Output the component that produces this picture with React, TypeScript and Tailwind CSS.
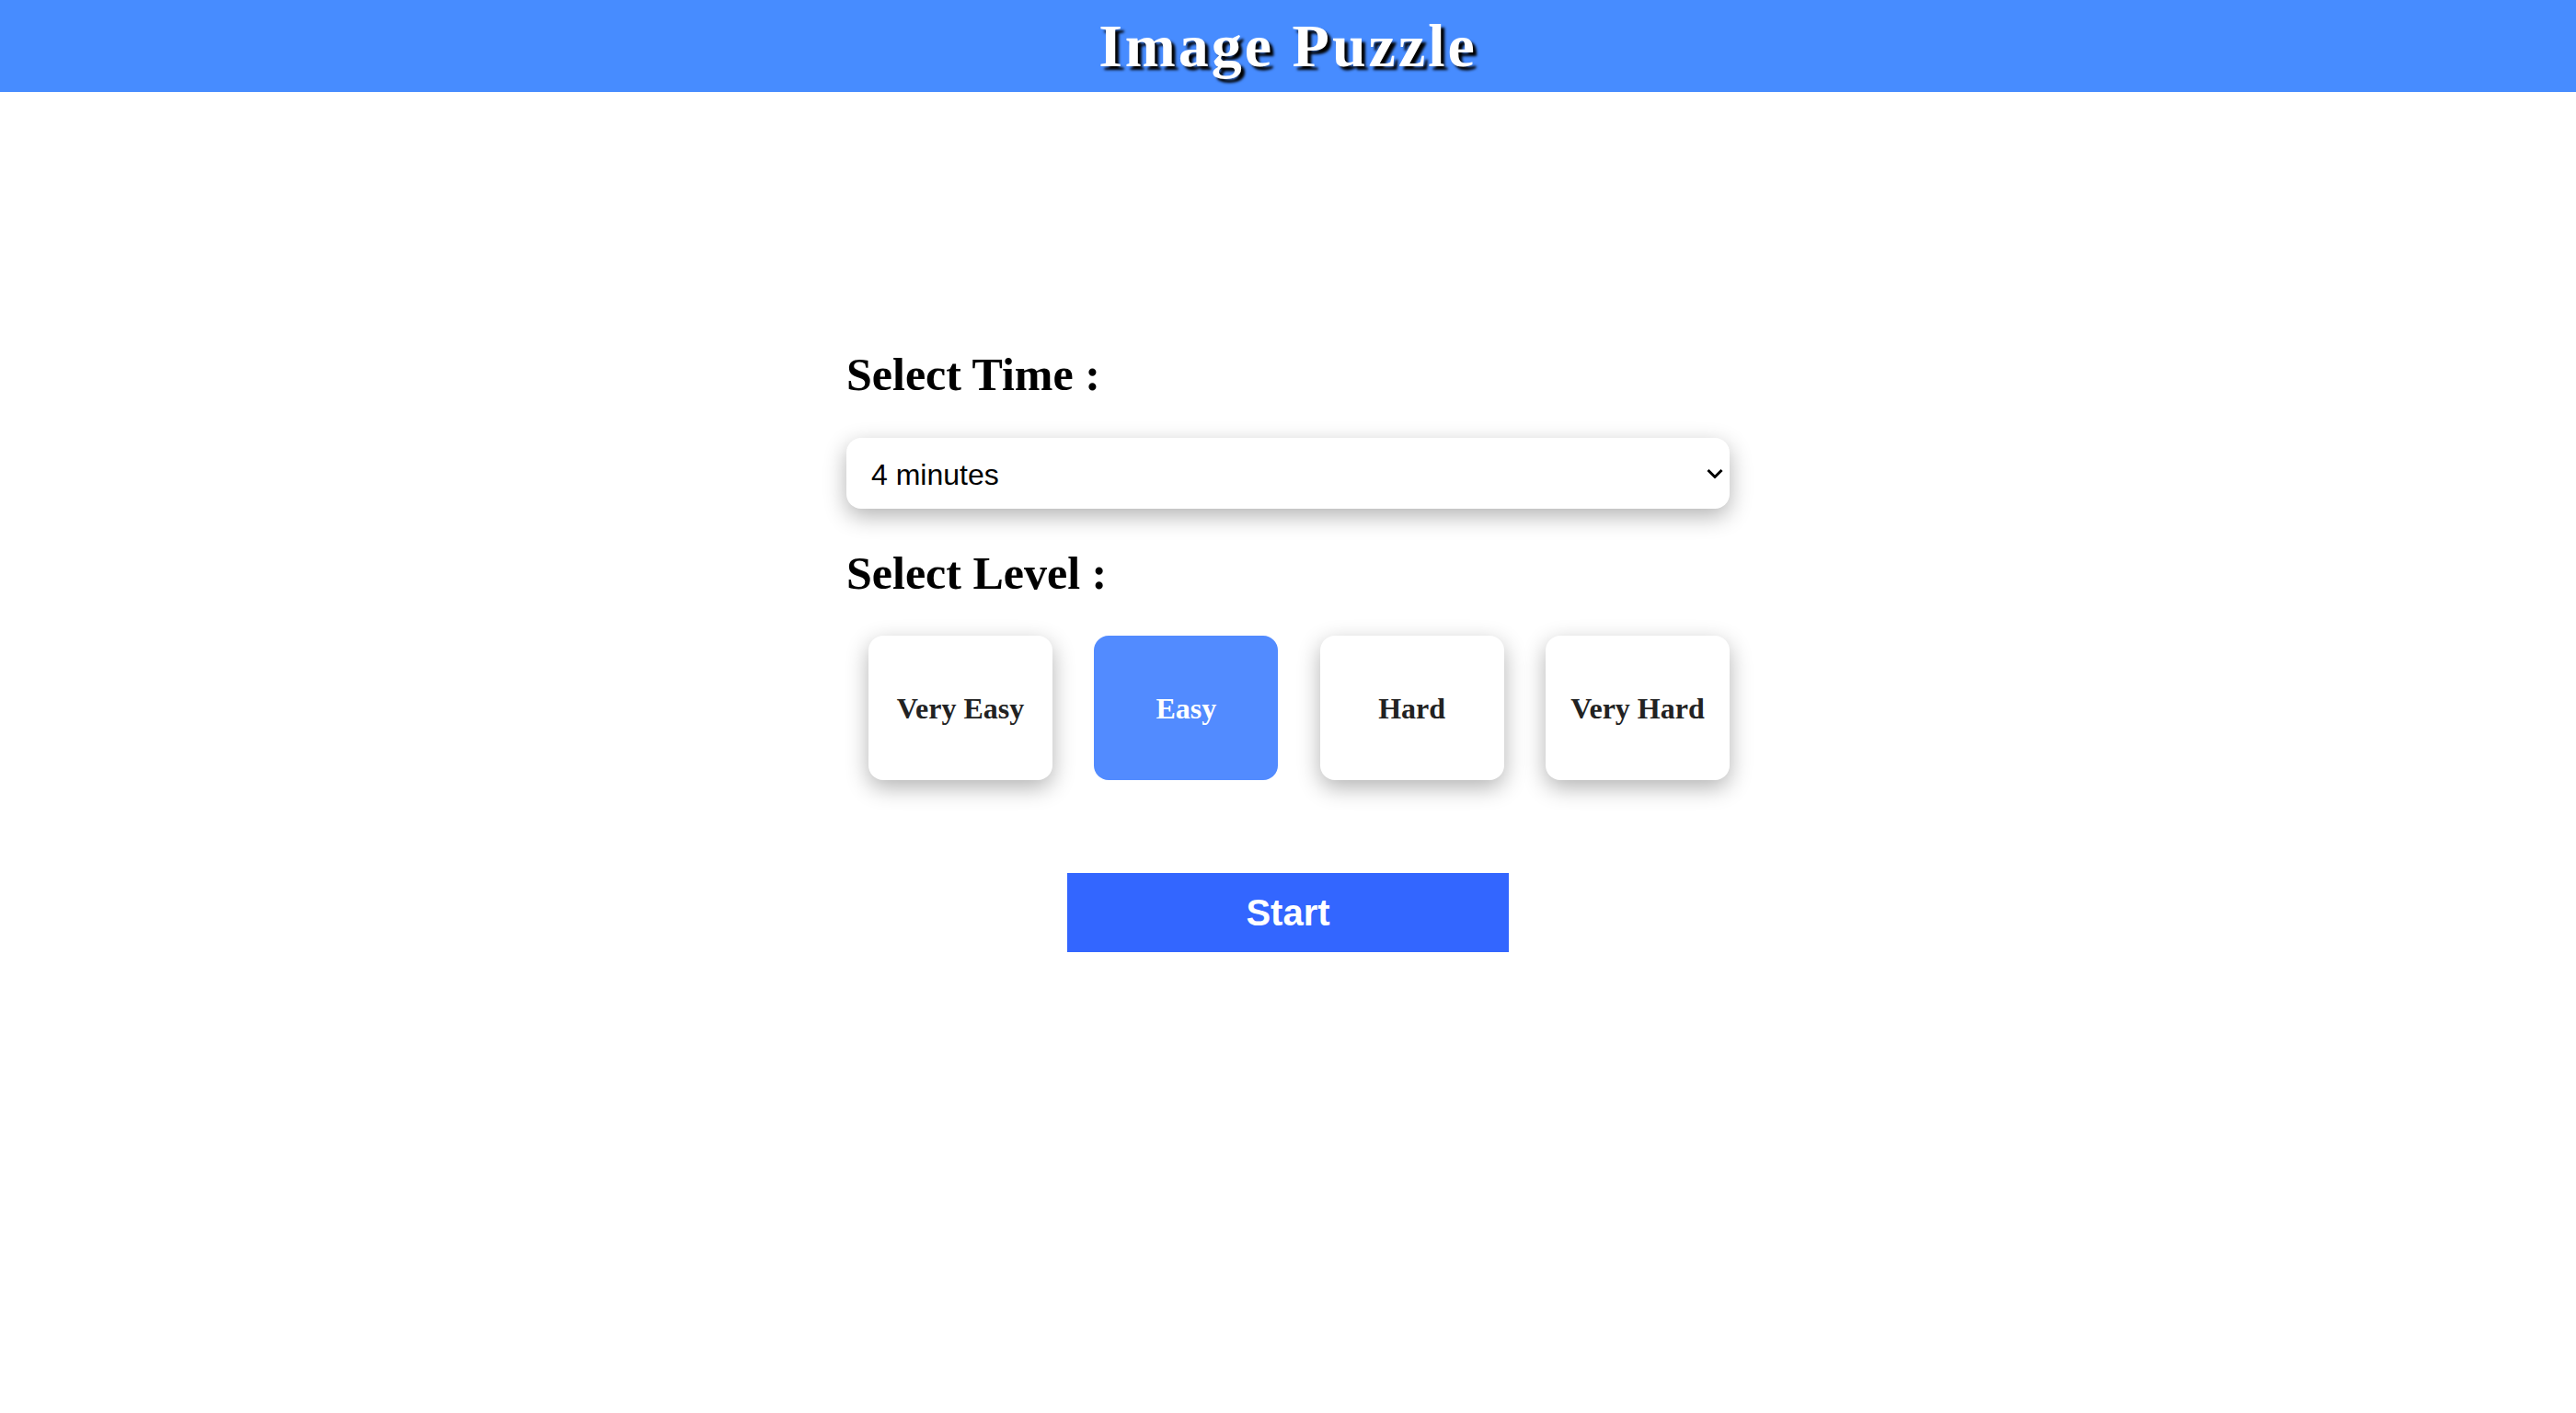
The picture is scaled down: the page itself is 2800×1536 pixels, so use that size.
import { useState } from "react";

const LEVELS = ["Very Easy", "Easy", "Hard", "Very Hard"];
const TIMES = ["1 minute", "2 minutes", "3 minutes", "4 minutes", "5 minutes"];

const serif = "font-['Liberation_Serif','Times_New_Roman',serif]";
const sans = "font-['Liberation_Sans',Arial,sans-serif]";

export default function App() {
  const [time, setTime] = useState("4 minutes");
  const [level, setLevel] = useState("Easy");

  return (
    <div className="min-h-screen bg-white">
      {/* header */}
      <header className="h-[100px] bg-[#478cff] flex items-center justify-center">
        <h1
          className={`${serif} text-[66px] leading-[100px] font-bold tracking-[3px] text-white [text-shadow:4px_4px_3px_#000]`}
        >
          Image Puzzle
        </h1>
      </header>

      <main className="w-[960px] mx-auto pt-[279px] flex flex-col">
        <h2 className={`${serif} text-[50px] leading-[56px] font-bold text-black`}>Select Time :</h2>

        <div className="relative mt-[41px]">
          <select
            value={time}
            onChange={(e) => setTime(e.target.value)}
            className={`${sans} appearance-none w-full h-[77px] rounded-[16px] bg-white pl-[27px] pr-[50px] pt-[2px] text-[32px] text-black shadow-[0_8px_24px_rgba(0,0,0,0.3)] outline-none`}
          >
            {TIMES.map((t) => (
              <option key={t} value={t}>
                {t}
              </option>
            ))}
          </select>
          {/* chevron */}
          <svg
            className="pointer-events-none absolute right-[7px] top-[50%] -translate-y-1/2 w-[18px] h-[11px]"
            viewBox="0 0 18 11"
            fill="none"
            stroke="#000"
            strokeWidth={3}
          >
            <path d="M1.5 1.5 L9 9 L16.5 1.5" />
          </svg>
        </div>

        <h2 className={`${serif} mt-[42px] text-[50px] leading-[56px] font-bold text-black`}>Select Level :</h2>

        <div className="mt-[40px] pl-[24px] flex justify-between">
          {LEVELS.map((l) => {
            const active = l === level;
            return (
              <button
                key={l}
                onClick={() => setLevel(l)}
                className={
                  active
                    ? `${serif} w-[200px] h-[157px] rounded-[16px] bg-[#528bff] flex items-center justify-center text-[32px] font-bold text-white`
                    : `${serif} w-[200px] h-[157px] rounded-[16px] bg-white flex items-center justify-center text-[32px] font-bold text-[#222] shadow-[0_8px_24px_rgba(0,0,0,0.3)]`
                }
              >
                {l}
              </button>
            );
          })}
        </div>

        <div className="mt-[101px] flex justify-center">
          <button
            className={`${sans} w-[480px] h-[86px] bg-[#3366ff] text-white text-[40px] font-bold flex items-center justify-center`}
          >
            Start
          </button>
        </div>
      </main>
    </div>
  );
}
